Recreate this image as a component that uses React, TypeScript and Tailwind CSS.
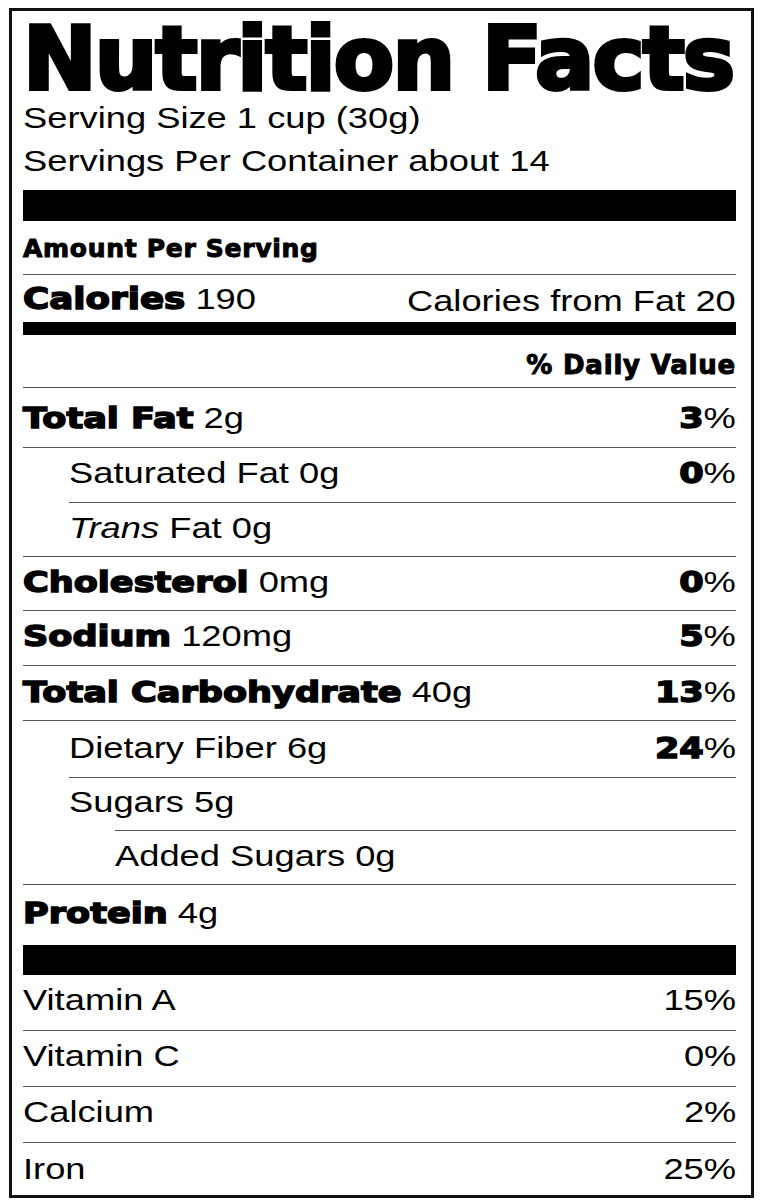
import React from 'react';

const reg = "font-['Liberation_Sans',Arial,sans-serif] font-normal";
const heavy = "font-['DejaVu_Sans',Verdana,sans-serif] font-bold [-webkit-text-stroke:1.5px_black]";
const stretchL = 'inline-block origin-left scale-x-[1.21] whitespace-nowrap';
const stretchR = 'inline-block origin-right scale-x-[1.21] whitespace-nowrap';

type Nutrient = {
    name: string;
    amount: string;
    dv?: string;
    bold?: boolean;
    italic?: boolean;
    rowCls: string;
};

const nutrients: Nutrient[] = [
    { name: 'Total Fat', amount: '2g', dv: '3', bold: true, rowCls: 'h-[60px] pt-[4px]' },
    { name: 'Saturated Fat', amount: '0g', dv: '0', rowCls: 'h-[55px] pl-[46px]' },
    { name: 'Trans', amount: 'Fat 0g', italic: true, rowCls: 'h-[54px] ml-[46px]' },
    { name: 'Cholesterol', amount: '0mg', dv: '0', bold: true, rowCls: 'h-[54px]' },
    { name: 'Sodium', amount: '120mg', dv: '5', bold: true, rowCls: 'h-[55px]' },
    { name: 'Total Carbohydrate', amount: '40g', dv: '13', bold: true, rowCls: 'h-[55px] pt-[2px]' },
    { name: 'Dietary Fiber', amount: '6g', dv: '24', rowCls: 'h-[57px] pl-[46px] pt-[2px]' },
    { name: 'Sugars', amount: '5g', rowCls: 'h-[53px] ml-[46px]' },
    { name: 'Added Sugars', amount: '0g', rowCls: 'h-[54px] ml-[92px]' },
    { name: 'Protein', amount: '4g', bold: true, rowCls: 'h-[61px]' },
];

const vitamins = [
    { name: 'Vitamin A', dv: '15%', rowCls: 'h-[55px] pb-[5px]' },
    { name: 'Vitamin C', dv: '0%', rowCls: 'h-[56px] border-t border-[#555] pb-[5px]' },
    { name: 'Calcium', dv: '2%', rowCls: 'h-[56px] border-t border-[#555] pb-[5px]' },
    { name: 'Iron', dv: '25%', rowCls: 'h-[53px] border-t border-[#555] pb-[1px]' },
];

const NutrientRow = ({ n }: { n: Nutrient }) => (
    <div className={`flex items-center justify-between border-t border-[#555] ${n.rowCls}`}>
        <span className={`${stretchL} leading-[36px]`}>
            {n.bold ? (
                <span className={`${heavy} text-[29px]`}>{n.name}</span>
            ) : (
                <span className={`${reg} text-[30px] ${n.italic ? 'italic' : ''}`}>{n.name}</span>
            )}
            <span className={`${reg} text-[30px]`}> {n.amount}</span>
        </span>
        {n.dv && (
            <span className={`${stretchR} leading-[36px]`}>
                <span className={`${heavy} text-[29px]`}>{n.dv}</span>
                <span className={`${reg} text-[30px]`}>%</span>
            </span>
        )}
    </div>
);

export default function App() {
    return (
        <div className="bg-white pt-[8px] pl-[9px]">
            <div className="w-[745px] h-[1190px] border-[3px] border-[#111] pl-[11px] pr-[15px] pt-[10px] text-black">
                <h1 className="font-['DejaVu_Sans',Verdana,sans-serif] font-bold text-[88px] leading-[75px] tracking-[-1.9px] [-webkit-text-stroke:4px_black] whitespace-nowrap">
                    Nutrition Facts
                </h1>
                <div className={`${reg} text-[30px] leading-[43px]`}>
                    <p><span className={stretchL}>Serving Size 1 cup (30g)</span></p>
                    <p><span className={stretchL}>Servings Per Container about 14</span></p>
                </div>

                <div className="mt-[8px] h-[31px] bg-black" />

                <div className="h-[54px] flex items-center pt-[2px] border-b border-[#555]">
                    <span className={`${heavy} [-webkit-text-stroke:1px_black] text-[25px] tracking-[0.7px]`}>Amount Per Serving</span>
                </div>

                <div className="h-[47px] flex items-center justify-between pt-[5px]">
                    <span className={`${stretchL} leading-[36px]`}>
                        <span className={`${heavy} text-[29.5px]`}>Calories</span>
                        <span className={`${reg} text-[30px]`}> 190</span>
                    </span>
                    <span className={`${stretchR} ${reg} text-[30px] leading-[36px]`}>Calories from Fat 20</span>
                </div>

                <div className="h-[13px] bg-black" />

                <div className="h-[52px] flex items-center justify-end pt-[9px]">
                    <span className={`${heavy} [-webkit-text-stroke:1px_black] text-[26px] tracking-[0.8px]`}>% Daily Value</span>
                </div>

                {nutrients.map((n) => (
                    <NutrientRow key={n.name} n={n} />
                ))}

                <div className="h-[30px] bg-black" />

                {vitamins.map((v) => (
                    <div key={v.name} className={`flex items-center justify-between ${v.rowCls}`}>
                        <span className={`${stretchL} ${reg} text-[30px] leading-[36px]`}>{v.name}</span>
                        <span className={`${stretchR} ${reg} text-[30px] leading-[36px]`}>{v.dv}</span>
                    </div>
                ))}
            </div>
        </div>
    );
}
